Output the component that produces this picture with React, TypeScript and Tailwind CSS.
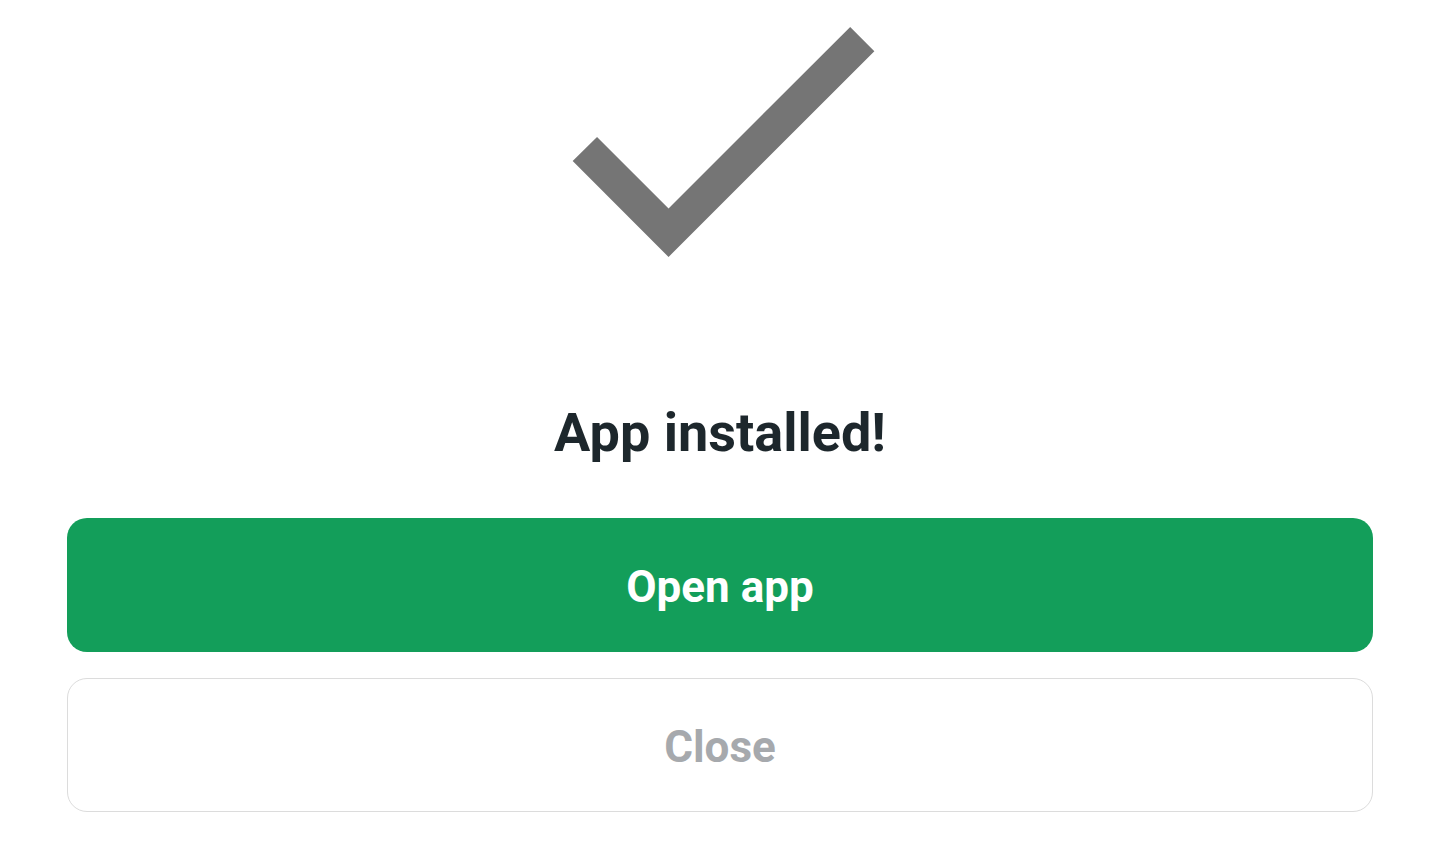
export default function App() {
  return (
    <div className="min-h-screen bg-white flex flex-col items-center px-[67px] font-['Roboto',sans-serif]">
      {/* Check icon */}
      <svg
        viewBox="0 5.59 24 13.41"
        className="w-[412px] h-[230px] mt-[27px] shrink-0"
        fill="#757575"
      >
        <path d="M9 16.17L4.83 12l-1.42 1.41L9 19 21 7l-1.41-1.41z" />
      </svg>

      <h1 className="mt-[145px] text-[54px] leading-[62px] font-bold text-[#1d272c]">
        App installed!
      </h1>

      <div className="w-full mt-[54px] flex flex-col gap-[26px]">
        <button
          type="button"
          className="h-[134px] w-full rounded-[20px] bg-[#139e5a] text-white text-[44px] font-bold pt-[4px]"
        >
          Open app
        </button>
        <button
          type="button"
          className="h-[134px] w-full rounded-[20px] border border-[#dcdcdc] bg-white text-[#a6a9ad] text-[44px] font-bold pt-[4px]"
        >
          Close
        </button>
      </div>
    </div>
  );
}
